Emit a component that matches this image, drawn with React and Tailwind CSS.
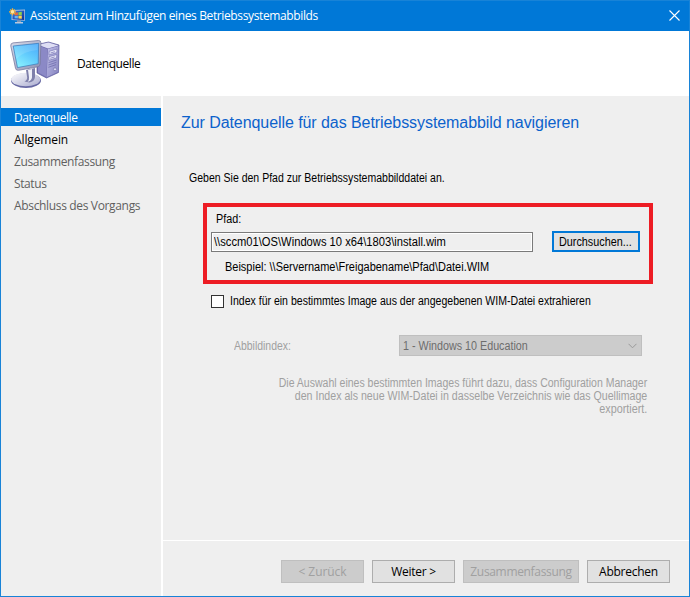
const UI = "font-['Open_Sans','Noto_Sans',sans-serif]";

function WizardIcon() {
  return (
    <svg width="17" height="17" viewBox="0 0 17 17" className="block shrink-0">
      <defs>
        <linearGradient id="wScreen" x1="0" y1="0" x2="1" y2="1">
          <stop offset="0" stopColor="#3b7fe0" />
          <stop offset="1" stopColor="#0b2f9c" />
        </linearGradient>
      </defs>
      <path d="M2.500 2 16 1.500v11.300L2.500 12z" fill="#a9bddb" />
      <path d="M3.500 3 15.200 2.500v9.400L3.500 11.200z" fill="url(#wScreen)" />
      <path d="M5.600 4.800 8.900 4.200v3l-3.300.3z" fill="#ef6a3a" />
      <path d="M9.400 4.200 12.800 3.700v3.200l-3.400.3z" fill="#8bd04c" />
      <path d="M5.600 7.900 8.900 7.700v2.800l-3.300-.3z" fill="#63b5f5" />
      <path d="M9.400 7.700 12.800 7.500v3.200l-3.400-.3z" fill="#ffd54a" />
      <path d="M8 12.400h4v1.800H8z" fill="#7f95b5" />
      <path d="M6 14h8v1.500H6z" fill="#b9c8dc" />
      <path d="M3.500.3v7M0 3.800h7M1.200 1.500l4.600 4.600M5.800 1.500 1.200 6.100" stroke="#f8b135" strokeWidth="1.300" />
      <circle cx="3.500" cy="3.800" r="1.700" fill="#ffe7a0" />
    </svg>
  );
}

function ComputerIcon() {
  return (
    <svg width="50" height="50" viewBox="0 0 50 50" className="block shrink-0">
      <defs>
        <linearGradient id="cScreen" x1=".9" y1="0" x2=".2" y2="1">
          <stop offset="0" stopColor="#4aa9fb" />
          <stop offset=".5" stopColor="#63cdfd" />
          <stop offset="1" stopColor="#8cf3ff" />
        </linearGradient>
        <linearGradient id="cFrame" x1="0" y1="0" x2="1" y2="1">
          <stop offset="0" stopColor="#d9dcea" />
          <stop offset="1" stopColor="#8d91b4" />
        </linearGradient>
        <linearGradient id="cFront" x1="0" y1="0" x2="1" y2="1">
          <stop offset="0" stopColor="#c3c2ea" />
          <stop offset="1" stopColor="#8583c0" />
        </linearGradient>
        <linearGradient id="cBase" x1="0" y1="0" x2="1" y2="1">
          <stop offset="0" stopColor="#ffffff" />
          <stop offset="1" stopColor="#a9abcf" />
        </linearGradient>
      </defs>
      <path d="M27 5.500 38.500 3 49 6 48.500 33.500 36.500 39 27 34z" fill="#6c69ab" stroke="#6260a0" strokeWidth=".7" />
      <path d="M28 5.800 38.500 3.500 48.500 6.400 38 9.600z" fill="#dedef4" />
      <path d="M28 6.500 37.600 10 36.300 38 28 33.500z" fill="#8b89c6" />
      <path d="M38 10 48.500 7 48 33 36.600 38.200z" fill="url(#cFront)" />
      <path d="m39.200 12.300 7.800-2.200-.2 3.500-7.800 2.300zM39 17.700l7.800-2.200-.2 3.400-7.800 2.400z" fill="#e6e6f8" stroke="#716fae" strokeWidth=".6" />
      <path d="m40.500 14 4.400-1.300M40.300 19.300l4.400-1.400" stroke="#7c79b8" strokeWidth=".8" />
      <path d="m38.600 23.600 8-2.600M38.400 26l8-2.700M38.300 28.300l7.800-2.700" stroke="#716fae" strokeWidth=".8" />
      <circle cx="45" cy="30.300" r="1.500" fill="#dadbf4" stroke="#5e5c9b" strokeWidth=".5" />
      <ellipse cx="16" cy="41.600" rx="15" ry="7.400" fill="#6769a4" />
      <ellipse cx="15.700" cy="40.500" rx="14.600" ry="6.800" fill="url(#cBase)" />
      <path d="M16 31 25 29v9q-.5 4.500-5.500 5.500l-5-1q3.500-2 2.500-5z" fill="#7e80ab" />
      <path d="M18 31 22 30v8.500q-.5 3.500-4.500 4.200 2-2 1.500-4.500z" fill="#eeeff8" />
      <path d="M.8 7Q.5 4.200 3 3.900L28.500 1.500q2.500 0 2.400 2.300L30.200 25q-.2 2.300-2.300 2.800L8.500 31.300q-2.500.4-3-2z" fill="url(#cFrame)" stroke="#777a9e" strokeWidth=".8" />
      <path d="M3.200 7 28.700 4.300 28.200 24.700 7.500 28.600z" fill="url(#cScreen)" stroke="#3979b8" strokeWidth=".7" />
      <path d="M3.900 7.500 28 4.900 27.500 11Q14 12 6 20z" fill="#fff" opacity=".13" />
    </svg>
  );
}

function Button({ children, width, text, disabled }) {
  return (
    <button
      disabled={disabled}
      className={`flex h-[23px] items-center justify-center border text-xs leading-[18px] whitespace-nowrap ${width} ${text} ${
        disabled ? 'border-[#bfbfbf] bg-[#cccccc] text-[#a0a0a0]' : 'border-[#adadad] bg-[#e1e1e1] text-black'
      }`}
    >
      {children}
    </button>
  );
}

const steps = [
  { label: 'Datenquelle', style: 'bg-[#0078d7] text-white tracking-[-0.4px]' },
  { label: 'Allgemein', style: 'text-black tracking-[-0.12px]' },
  { label: 'Zusammenfassung', style: 'text-[#5f5f5f] tracking-[-0.36px]' },
  { label: 'Status', style: 'text-[#5f5f5f] tracking-[-0.4px]' },
  { label: 'Abschluss des Vorgangs', style: 'text-[#5f5f5f] tracking-[-0.34px]' },
];

export default function App() {
  return (
    <div className={`flex h-[597px] w-[690px] flex-col border border-[#1883d7] bg-[#efefef] text-xs ${UI}`}>
      <header className="flex h-[30px] shrink-0 items-center bg-[#0078d7] pr-[9px] pl-2 text-white">
        <WizardIcon />
        <h1 className="ml-1 flex-1 leading-[18px] tracking-[-0.375px] whitespace-nowrap">
          Assistent zum Hinzufügen eines Betriebssystemabbilds
        </h1>
        <svg width="11" height="11" viewBox="0 0 11 11" className="mb-px block">
          <path d="M.5.5l10 10M10.500.5l-10 10" stroke="#fff" strokeWidth="1.1" fill="none" />
        </svg>
      </header>

      <div className="flex h-[65px] shrink-0 items-center bg-white pl-[9px]">
        <ComputerIcon />
        <h2 className="ml-[17px] pt-px leading-[18px] tracking-[-0.42px] text-black">Datenquelle</h2>
      </div>

      <div className="flex min-h-0 flex-1">
        <nav className="flex w-40 shrink-0 flex-col gap-1 pt-3">
          {steps.map((s) => (
            <div key={s.label} className={`h-[18px] pl-[13px] leading-5 whitespace-nowrap ${s.style}`}>
              {s.label}
            </div>
          ))}
        </nav>
        <div className="w-[2px] shrink-0 bg-white" />

        <div className="flex min-w-0 flex-1 flex-col">
          <main className="flex-1 pt-[17px] font-['Liberation_Sans',Arial,sans-serif] leading-[14px] text-black">
            <h3 className="ml-[18px] text-base leading-5 tracking-[-0.07px] whitespace-nowrap text-[#0c62cc]">
              Zur Datenquelle für das Betriebssystemabbild navigieren
            </h3>
            <p className="mt-[38px] ml-[26px] origin-left scale-x-[0.877] whitespace-nowrap">
              Geben Sie den Pfad zur Betriebssystemabbilddatei an.
            </p>

            <section className="mt-[18px] ml-10 h-[81px] w-[450px] border-4 border-[#ed1c24] pt-[5px] pl-1">
              <div className="ml-[5px] origin-left scale-x-[0.9]">Pfad:</div>
              <div className="mt-[5px] flex items-end">
                <div className="h-5 w-[322px] border border-[#7a7a7a] bg-[#efefef] p-px shadow-[inset_0_0_0_1px_#fff]">
                  <div className="mt-px ml-px origin-left scale-x-[0.932] leading-[14px] whitespace-nowrap">
                    {'\\\\sccm01\\OS\\Windows 10 x64\\1803\\install.wim'}
                  </div>
                </div>
                <button className="ml-[19px] flex h-[21px] w-[88px] items-center justify-center border-2 border-[#0078d7] bg-[#e1e1e1]">
                  <span className="mr-[2px] inline-block scale-x-[0.9]">Durchsuchen...</span>
                </button>
              </div>
              <div className="mt-2 ml-[14px] origin-left scale-x-[0.915] whitespace-nowrap">
                {'Beispiel: \\\\Servername\\Freigabename\\Pfad\\Datei.WIM'}
              </div>
            </section>

            <label className="mt-[10px] ml-12 flex items-end">
              <span className="h-[13px] w-[13px] shrink-0 border border-[#333] bg-white" />
              <span className="ml-[6px] origin-left scale-x-[0.878] whitespace-nowrap">
                Index für ein bestimmtes Image aus der angegebenen WIM-Datei extrahieren
              </span>
            </label>

            <div className="mt-[27px] ml-[71px] flex h-[21px] items-center text-[#a0a0a0]">
              <span className="w-[165px] origin-left scale-x-[0.87]">Abbildindex:</span>
              <div className="flex h-[21px] w-[243px] items-center justify-between border border-[#bfbfbf] bg-[#cccccc] pr-1 pl-[3px] text-[#6d6d6d]">
                <span className="origin-left scale-x-[0.895] whitespace-nowrap">1 - Windows 10 Education</span>
                <svg width="9" height="6" viewBox="0 0 9 6" className="block">
                  <path d="M.5.8l4 4 4-4" fill="none" stroke="#999" strokeWidth="1" />
                </svg>
              </div>
            </div>

            <p className="mt-[21px] mr-[42px] flex flex-col items-end leading-[13px] whitespace-nowrap text-[#a0a0a0]">
              <span className="origin-right scale-x-[0.877]">
                Die Auswahl eines bestimmten Images führt dazu, dass Configuration Manager
              </span>
              <span className="origin-right scale-x-[0.885]">
                den Index als neue WIM-Datei in dasselbe Verzeichnis wie das Quellimage
              </span>
              <span className="origin-right scale-x-[0.9]">exportiert.</span>
            </p>
          </main>

          <footer className="flex h-14 shrink-0 justify-end gap-2 border-t border-white pt-[19px] pr-[19px]">
            <Button width="w-[83px]" text="tracking-[-0.05px]" disabled>{'< Zurück'}</Button>
            <Button width="w-[83px]" text="tracking-[-0.25px]">{'Weiter >'}</Button>
            <Button width="w-[116px]" text="tracking-[-0.33px]" disabled>Zusammenfassung</Button>
            <Button width="w-[83px]" text="tracking-[-0.25px]">Abbrechen</Button>
          </footer>
        </div>
      </div>
    </div>
  );
}
